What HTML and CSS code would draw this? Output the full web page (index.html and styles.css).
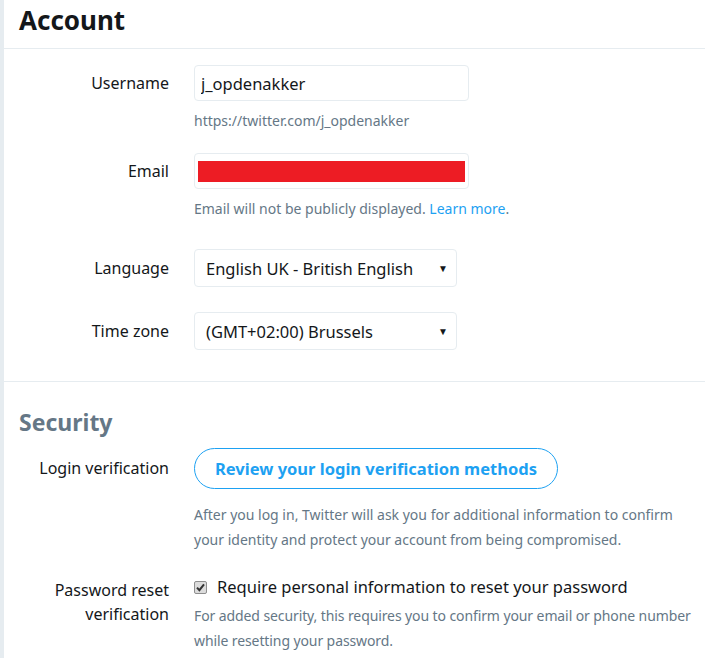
FILE: index.html
```html
<!DOCTYPE html>
<html lang="en">
<head>
    <meta charset="UTF-8">
    <meta name="viewport" content="width=device-width, initial-scale=1.0">
    <title>Twitter - Account settings</title>
    <link rel="stylesheet" href="styles.css">
</head>
<body>

    <div class="settings">
        <!-- Account -->
        <div class="settings-header">
            <h1>Account</h1>
        </div>

        <div class="section">
            <div class="row">
                <label class="row-label">Username</label>
                <div class="row-field">
                    <input class="text-input" type="text" value="j_opdenakker">
                    <p class="hint">https://twitter.com/j_opdenakker</p>
                </div>
            </div>

            <div class="row row-email">
                <label class="row-label">Email</label>
                <div class="row-field">
                    <div class="text-input redacted"><span class="redact-bar"></span></div>
                    <p class="hint">Email will not be publicly displayed. <a href="#">Learn more</a>.</p>
                </div>
            </div>

            <div class="row row-select row-language">
                <label class="row-label">Language</label>
                <div class="row-field">
                    <div class="select-wrap">
                        <select class="select">
                            <option>English UK - British English</option>
                        </select>
                    </div>
                </div>
            </div>

            <div class="row row-select">
                <label class="row-label">Time zone</label>
                <div class="row-field">
                    <div class="select-wrap">
                        <select class="select">
                            <option>(GMT+02:00) Brussels</option>
                        </select>
                    </div>
                </div>
            </div>
        </div>

        <!-- Security -->
        <div class="section section-security">
            <h2>Security</h2>

            <div class="row row-top row-login">
                <label class="row-label">Login verification</label>
                <div class="row-field">
                    <button class="outline-btn">Review your login verification methods</button>
                    <p class="hint hint-long">After you log in, Twitter will ask you for additional information to confirm your identity and protect your account from being compromised.</p>
                </div>
            </div>

            <div class="row row-top row-password">
                <label class="row-label">Password reset verification</label>
                <div class="row-field">
                    <div class="check-line">
                        <svg class="check-box" width="13" height="13" viewBox="0 0 13 13">
                            <rect x="0.5" y="0.5" width="12" height="12" rx="1.5" fill="#dcdcdc" stroke="#8e8e8e"/>
                            <path d="M3 6.6 L5.4 9.2 L10 3.4" fill="none" stroke="#333" stroke-width="2"/>
                        </svg>
                        <span>Require personal information to reset your password</span>
                    </div>
                    <p class="hint hint-long">For added security, this requires you to confirm your email or phone number while resetting your password.</p>
                </div>
            </div>
        </div>
    </div>

</body>
</html>
```

FILE: styles.css
```css
* { margin: 0; padding: 0; box-sizing: border-box; font-family: 'Noto Sans', 'Open Sans', sans-serif; }
body { background: #e6ecf0; color: #14171a; width: 705px; height: 658px; overflow: hidden; }

.settings { margin-left: 4px; background: #fff; min-height: 658px; }

/* Header */
.settings-header { height: 49px; border-bottom: 1px solid #e6ecf0; padding-left: 15px; display: flex; align-items: center; }
.settings-header h1 { font-size: 26px; font-weight: bold; line-height: 1; margin-top: -8px; }

/* Sections */
.section { padding-top: 16px; padding-bottom: 31px; border-bottom: 1px solid #e6ecf0; }
.section-security { border-bottom: none; padding-top: 24px; }
.section-security h2 { font-size: 23px; font-weight: bold; color: #657786; padding-left: 15px; line-height: 32px; }

/* Rows */
.row { display: flex; align-items: flex-start; }
.row-label { width: 190px; flex-shrink: 0; padding-right: 25px; text-align: right; font-size: 16px; line-height: 36px; color: #14171a; }
.row-field { flex: 1; }
.row-email { margin-top: 22px; }
.row-select { margin-top: 25px; }
.row-language { margin-top: 30px; }
.row-select .row-label { line-height: 38px; }

/* Inputs */
.text-input {
    display: block; width: 275px; height: 36px; padding: 0 6px;
    border: 1px solid #e6ecf0; border-radius: 4px; background: #fff;
    font-size: 16.5px; color: #14171a; outline: none;
}
.redacted { padding: 7px 3px; }
.redact-bar { display: block; height: 21px; background: #ed1c24; }

.hint { font-size: 14px; color: #657786; margin-top: 10px; line-height: 20px; }
.hint a { color: #1da1f2; text-decoration: none; }

/* Select */
.select-wrap { position: relative; width: 263px; }
.select-wrap::after {
    content: "▼"; position: absolute; right: 9px; top: 12px;
    font-size: 10px; color: #14171a; pointer-events: none;
}
.select {
    display: block; width: 100%; height: 38px; padding: 0 11px;
    border: 1px solid #e6ecf0; border-radius: 4px; background: #fff;
    font-size: 16.5px; color: #14171a; appearance: none; -webkit-appearance: none; outline: none;
}

/* Security rows */
.row-top { margin-top: 10px; }
.row-login .row-label { line-height: 41px; }
.outline-btn {
    height: 41px; padding: 0 20px; border: 1px solid #1da1f2; border-radius: 21px;
    background: #fff; color: #1da1f2; font-size: 16.5px; font-weight: bold; cursor: pointer;
}
.hint-long { line-height: 25px; margin-top: 13px; }

.row-password { margin-top: 23px; }
.row-password .row-label { line-height: 24px; padding-top: 3px; }
.check-line { display: flex; align-items: center; gap: 10px; font-size: 16.5px; line-height: 24px; }
.check-box { flex-shrink: 0; }
.row-password .hint-long { margin-top: 4px; letter-spacing: -0.1px; }
```
